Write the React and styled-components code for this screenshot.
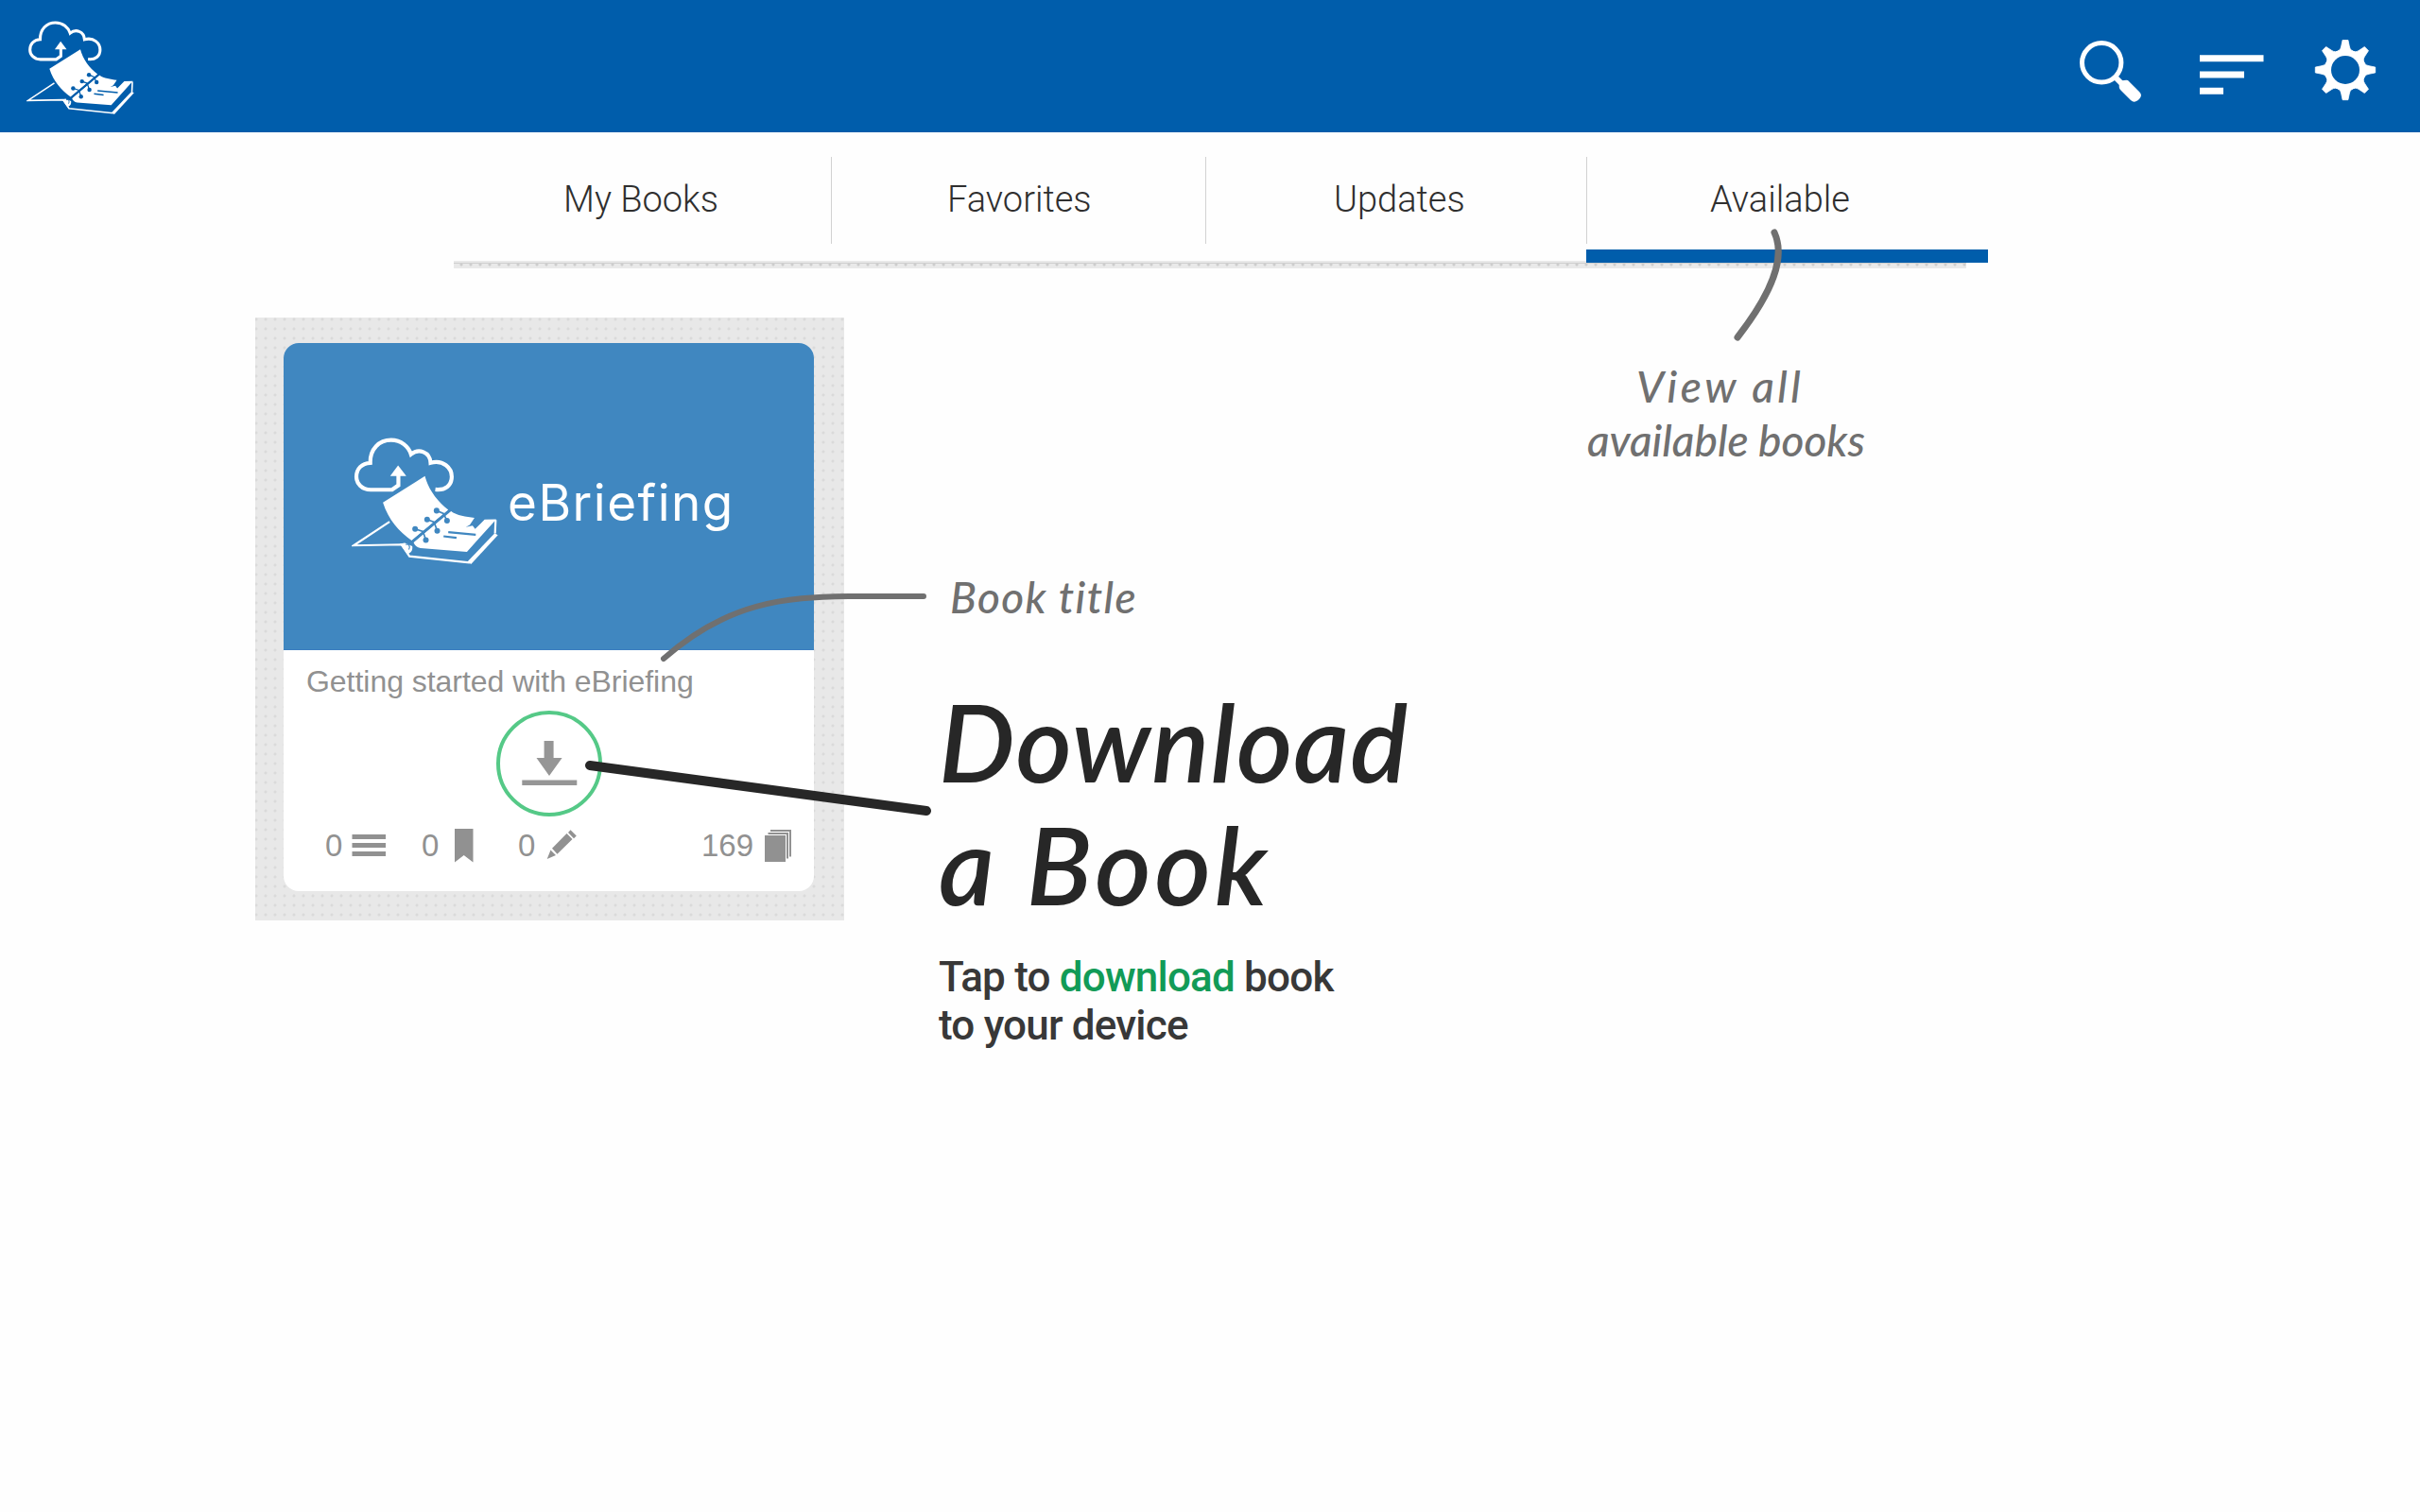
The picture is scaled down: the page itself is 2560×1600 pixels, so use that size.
import React from "react";
import styled, { createGlobalStyle } from "styled-components";

const BLUE = "#005dab";
const COVER = "#4087c0";
const GREY = "#919191";
const NOTE = "#707070";
const INK = "#272727";

const GlobalStyle = createGlobalStyle`
  * { box-sizing: border-box; }
  body { margin: 0; background: #fefefe; }
`;

const Page = styled.div`
  position: relative;
  width: 2560px;
  height: 1600px;
  overflow: hidden;
  background: #fefefe;
  font-family: Roboto, "Liberation Sans", sans-serif;
`;

const Header = styled.header`
  display: flex;
  justify-content: space-between;
  align-items: flex-start;
  height: 140px;
  padding: 22px 46px 0 28px;
  background: ${BLUE};
`;

const Actions = styled.div`
  display: flex;
  align-items: flex-start;
  padding-top: 20px;
`;

const Action = styled.svg`
  display: block;
  width: ${(p) => p.$w}px;
  height: 68px;
  margin-left: ${(p) => p.$gap || 0}px;
`;

const LogoSvg = styled.svg`
  display: block;
  flex: none;
  width: ${(p) => p.$w}px;
  height: ${(p) => p.$h}px;
`;

const TabBar = styled.nav`
  display: flex;
  flex-direction: column;
  width: 1623px;
  margin-left: 480px;
  padding-top: 26px;
`;

const TabRow = styled.div`
  display: grid;
  grid-template-columns: 400px 396px 403px 424px;
`;

const TabLabel = styled.div`
  height: 92px;
  padding-left: ${(p) => p.$inset}px;
  border-right: ${(p) => (p.$last ? "0" : "1px solid #d2d2d2")};
  font-size: 38px;
  font-weight: 300;
  line-height: 90px;
  white-space: nowrap;
  color: #2f2f2f;
`;

const Indicator = styled.div`
  width: 425px;
  height: 14px;
  margin: 6px 0 0 1198px;
  background: ${BLUE};
`;

const Strip = styled.div`
  display: flex;
  width: 1600px;
  height: 8px;
  margin-top: -2px;
  background:
    linear-gradient(to bottom, transparent 2px, #cfcfcf 2px, #cfcfcf 3px, transparent 3px),
    radial-gradient(circle at 8px 4px, #cdcdcd 1px, transparent 2px) 0 0 / 10px 8px,
    #e9e9e9;
`;

const StripMask = styled.div`
  width: 402px;
  height: 2px;
  margin-left: 1198px;
  background: ${BLUE};
`;

const Main = styled.main`
  display: flex;
  align-items: flex-start;
  padding: 52px 0 0 270px;
`;

const Panel = styled.section`
  width: 623px;
  height: 638px;
  padding: 27px 32px 31px 30px;
  background:
    radial-gradient(circle at 5px 5px, #dadada 1px, rgba(218, 218, 218, 0) 2px) -4px -3px / 10px 10px,
    #e8e8e8;
`;

const Card = styled.article`
  width: 561px;
  height: 580px;
  border-radius: 16px;
  overflow: hidden;
  background: #fff;
`;

const Cover = styled.div`
  display: flex;
  height: 325px;
  padding: 100px 0 0 72px;
  border-bottom: 1px solid #3b7dc0;
  background: ${COVER};
`;

const Brand = styled.div`
  margin: 39px 0 0 10px;
  font-family: Inter, Roboto, sans-serif;
  font-size: 53px;
  font-weight: 400;
  line-height: 60px;
  letter-spacing: 1.5px;
  color: #fff;
`;

const BookTitle = styled.div`
  padding: 14px 0 0 24px;
  font-family: "Liberation Sans", Arial, sans-serif;
  font-size: 32px;
  line-height: 38px;
  letter-spacing: -0.04px;
  white-space: nowrap;
  color: ${GREY};
`;

const DownloadButton = styled.div`
  display: flex;
  justify-content: center;
  width: 112px;
  height: 112px;
  margin: 12px 0 0 225px;
  border: 4px solid #55c987;
  border-radius: 50%;
`;

const Stats = styled.div`
  display: flex;
  align-items: flex-start;
  padding: 11px 0 0 44px;
`;

const Stat = styled.div`
  display: flex;
  align-items: flex-start;
  width: ${(p) => p.$w}px;
  font-family: "Liberation Sans", Arial, sans-serif;
  font-size: 33px;
  line-height: 40px;
  color: ${GREY};
`;

const StatIcon = styled.svg`
  display: block;
  width: ${(p) => p.$w}px;
  height: 40px;
  margin-left: ${(p) => p.$gap}px;
  fill: ${GREY};
`;

const Guide = styled.section`
  padding: 0 0 0 100px;
`;

const Script = styled.div`
  font-family: "Lato", "Open Sans", sans-serif;
  font-style: italic;
  font-weight: ${(p) => p.$weight || 500};
  font-size: ${(p) => p.$size}px;
  line-height: ${(p) => p.$line}px;
  letter-spacing: ${(p) => p.$track || 0}px;
  margin-top: ${(p) => p.$top || 0}px;
  margin-left: ${(p) => p.$left || 0}px;
  white-space: nowrap;
  color: ${(p) => p.$color};
`;

const Instruction = styled.p`
  margin: 30px 0 0;
  font-size: 44px;
  font-weight: 500;
  line-height: 51px;
  letter-spacing: -0.8px;
  color: #383838;
`;

const Green = styled.span`
  color: #129b57;
`;

const TabNote = styled.div`
  position: absolute;
  left: 1679px;
  top: 380px;
`;

const Pointers = styled.svg`
  position: absolute;
  left: 0;
  top: 0;
  width: 2560px;
  height: 1600px;
  pointer-events: none;
  fill: none;
  stroke-linecap: round;
`;

function Logo({ w, h, bg }) {
  return (
    <LogoSvg $w={w} $h={h} viewBox="38 69 464 400" preserveAspectRatio="none" fill="none">
      <path
        d="M186 185V220L166 234H98C70 234 53 214 53 193C53 168 70 150 97 149C96 105 125 77 163 77C195 77 218 97 226 122C250 102 286 114 288 149C328 138 355 165 355 193C355 219 335 237 303 233"
        stroke="#fff"
        strokeWidth="12.5"
      />
      <path d="M185 157L211 191H160Z" fill="#fff" />
      <path d="M270 191C281 232 308 270 344 297L228 394C188 365 155 330 137 274Z" fill="#fff" />
      <path
        d="M351 300C372 317 400 317 427 323L412 345L399 352L421 347L429 358L459 328L496 327L403 430L256 418C245 416 238 410 234 400Z"
        fill="#fff"
      />
      <path d="M494 329L492 372M412 464L221 444L196 407M198 407L44 410L158 335" stroke="#fff" strokeWidth="6.5" />
      <path d="M491 371L501 377L416 469L405 461Z" fill="#fff" />
      <path d="M190 405L206 402L230 412C232 424 226 432 220 434L216 440Z" fill="#fff" />
      <path d="M209 407C219 404 225 412 219 423" stroke={bg} strokeWidth="3.5" />
      <path d="M352 297L230 398" stroke={bg} strokeWidth="8" />
      <g stroke={bg} strokeWidth="5">
        <path d="M307 300L329 309L340 332M277 328L299 336L309 364M239 358L264 366L273 393" />
        <path d="M344 368L431 376M329 381L370 386" strokeWidth="6.5" />
      </g>
      <g fill={bg}>
        <circle cx="307" cy="300" r="9" />
        <circle cx="277" cy="328" r="9" />
        <circle cx="239" cy="358" r="9" />
        <circle cx="340" cy="332" r="9" />
        <circle cx="309" cy="364" r="9" />
        <circle cx="273" cy="393" r="9" />
      </g>
    </LogoSvg>
  );
}

const TOOTH =
  "M-2.9 -31.7H2.9L4.3 -25C4.9 -21.5 7 -19.6 9.6 -19.4L0 0L-9.6 -19.4C-7 -19.6 -4.900 -21.5 -4.3 -25Z";

function Gear() {
  return (
    <Action $w={66} $gap={53} viewBox="2448 42 66 68">
      <g transform="translate(2481 74)">
        {[0, 45, 90, 135, 180, 225, 270, 315].map((a) => (
          <path key={a} d={TOOTH} transform={`rotate(${a})`} fill="#fff" stroke="#fff" strokeWidth="0.8" strokeLinejoin="round" />
        ))}
        <circle r="21.3" fill="#fff" />
        <circle r="15" fill={BLUE} />
      </g>
    </Action>
  );
}

const tabs = [
  { label: "My Books", inset: 116 },
  { label: "Favorites", inset: 122 },
  { label: "Updates", inset: 135 },
  { label: "Available", inset: 130 },
];

export default function App() {
  return (
    <>
      <GlobalStyle />
      <Page>
        <Header>
          <Logo w={114} h={99} bg={BLUE} />
          <Actions>
            <Action $w={68} viewBox="2198 42 68 68">
              <circle cx="2223.2" cy="66.3" r="20.7" fill="none" stroke="#fff" strokeWidth="5" />
              <path d="M2237 81L2245 89" stroke="#fff" strokeWidth="6" />
              <path
                d="M2242 88Q2241 93 2243 95L2254 106Q2257 109 2260 107Q2264 105 2265 101Q2265 99 2263 97L2252 86Q2251 84 2247 85Q2243 85 2242 88Z"
                fill="#fff"
              />
            </Action>
            <Action $w={68} $gap={61} viewBox="2327 42 68 68">
              <path d="M2327 58.3h67.5v6.9H2327zM2327 75.5h47v7h-47zM2327 92.8h25v7h-25z" fill="#fff" />
            </Action>
            <Gear />
          </Actions>
        </Header>

        <TabBar>
          <TabRow>
            {tabs.map((t, i) => (
              <TabLabel key={t.label} $inset={t.inset} $last={i === 3}>
                {t.label}
              </TabLabel>
            ))}
          </TabRow>
          <Indicator />
          <Strip>
            <StripMask />
          </Strip>
        </TabBar>

        <Main>
          <Panel>
            <Card>
              <Cover>
                <Logo w={155} h={134} bg={COVER} />
                <Brand>eBriefing</Brand>
              </Cover>
              <BookTitle>Getting started with eBriefing</BookTitle>
              <DownloadButton>
                <svg width="60" height="104" viewBox="551 756 60 104" fill="#969696">
                  <path d="M575.6 784h10v18h9L581 821 567.5 802h8.1zM552.3 825.6h58v5.4h-58z" />
                </svg>
              </DownloadButton>
              <Stats>
                <Stat $w={102}>
                  0
                  <StatIcon $w={36} $gap={10} viewBox="372 875 36 40">
                    <path d="M372.5 883H408v5h-35.5zM372.5 892H408v5h-35.5zM372.5 901H408v5h-35.5z" />
                  </StatIcon>
                </Stat>
                <Stat $w={102}>
                  0
                  <StatIcon $w={22} $gap={17} viewBox="481 875 22 40">
                    <path d="M481 877h19.5v35.5L490.7 905 481 912.5z" />
                  </StatIcon>
                </Stat>
                <Stat $w={194}>
                  0
                  <StatIcon $w={34} $gap={12} viewBox="578 875 34 40">
                    <path d="M578.7 909L582.5 899.5L588 905ZM584 897.7L599.5 882L605.5 888L589.5 903.8ZM601 881L603.5 878.3L609.8 884.5L607 887.3Z" />
                  </StatIcon>
                </Stat>
                <Stat>
                  169
                  <StatIcon $w={29} $gap={12} viewBox="809 875 29 40">
                    <path d="M809 884h22v28h-22zM812.5 881h21.5v27.5h-2v-25.5h-19.5zM815 878h22v28.5h-2v-26.5h-20z" />
                  </StatIcon>
                </Stat>
              </Stats>
            </Card>
          </Panel>
          <Guide>
            <Script $size={46} $line={50} $top={271} $left={12} $track={1.4} $color={NOTE}>
              Book title
            </Script>
            <Script $size={114} $line={130} $top={62} $weight={600} $track={1} $color={INK}>
              Download
            </Script>
            <Script $size={114} $line={130} $weight={600} $track={4} $color={INK}>
              a Book
            </Script>
            <Instruction>
              Tap to <Green>download</Green> book
              <br />
              to your device
            </Instruction>
          </Guide>
        </Main>

        <TabNote>
          <Script $size={46} $line={57} $left={52} $track={3.4} $color={NOTE}>
            View all
          </Script>
          <Script $size={46} $line={57} $color={NOTE}>
            available books
          </Script>
        </TabNote>

        <Pointers>
          <path d="M1877 246C1889 272 1876 308 1838 357" stroke={NOTE} strokeWidth="7" />
          <path d="M702 697C770 637 830 632 898 631L977 631" stroke={NOTE} strokeWidth="6" />
          <path d="M624 810L980 858" stroke={INK} strokeWidth="10" />
        </Pointers>
      </Page>
    </>
  );
}
